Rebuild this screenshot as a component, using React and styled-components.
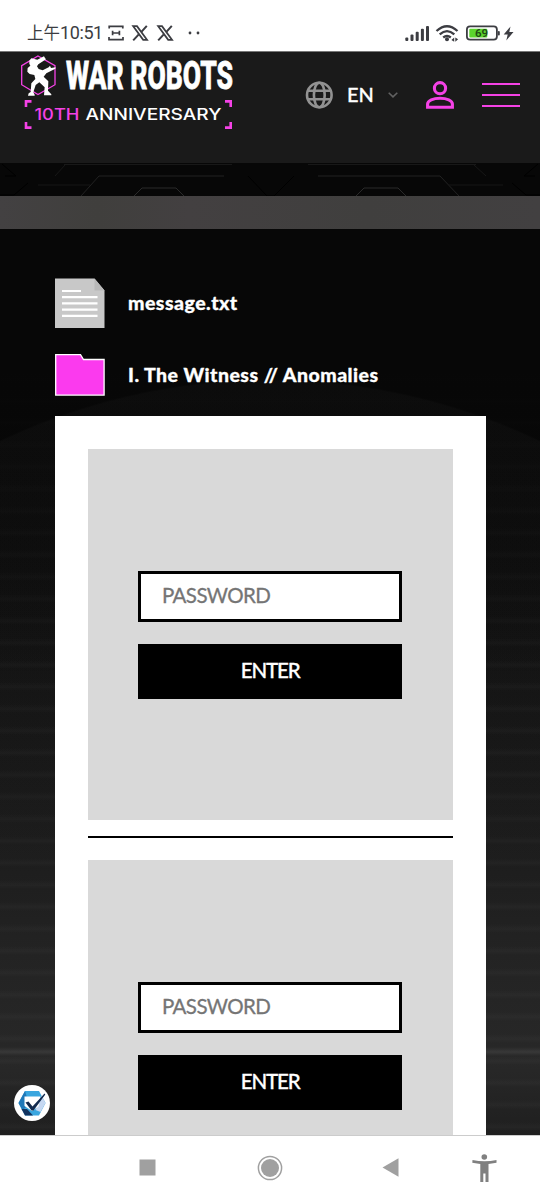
import React, { useState } from 'react';
import styled, { createGlobalStyle } from 'styled-components';

const pink = '#f542e6';

const GlobalStyle = createGlobalStyle`
  body {
    margin: 0;
    background: #fff;
    font-family: Lato, "Noto Sans CJK SC", sans-serif;
  }
  *, *::before, *::after {
    box-sizing: border-box;
  }
  svg {
    display: block;
    flex: none;
    overflow: visible;
  }
`;

const Screen = styled.div`
  width: 540px;
  height: 1200px;
  display: flex;
  flex-direction: column;
  overflow: hidden;
  background: #fff;
`;

const StatusBar = styled.div`
  flex: none;
  height: 52px;
  padding: 15px 26px 0 27px;
  display: flex;
  justify-content: space-between;
  align-items: center;
  border-bottom: 1px solid #777;
`;

const Clock = styled.span`
  width: 81px;
  font: 18px/24px Roboto, "Noto Sans CJK SC", sans-serif;
  letter-spacing: -0.4px;
  white-space: nowrap;
  color: #3c3d42;

  small {
    font-size: 16.5px;
    letter-spacing: 0;
  }
`;

const StatusGroup = styled.div`
  display: flex;
  align-items: center;
`;

const Header = styled.header`
  flex: none;
  height: 111px;
  padding: 0 20px;
  display: flex;
  align-items: flex-start;
  background: #1a1a1a;
`;

const HeaderTools = styled.div`
  height: 86px;
  margin-left: 69px;
  display: flex;
  align-items: center;
`;

const Language = styled.button`
  margin: 0 28px 0 0;
  padding: 0;
  display: flex;
  align-items: center;
  border: 0;
  background: none;
  color: #fff;
  font: 500 20px/24px Lato, sans-serif;
`;

const LanguageName = styled.span`
  width: 27px;
  margin: 0 14px;
  padding-bottom: 2px;
  -webkit-text-stroke: 0.3px #fff;
`;

const MenuButton = styled.button`
  width: 38px;
  height: 24px;
  margin-left: 28px;
  padding: 0;
  display: flex;
  flex-direction: column;
  justify-content: space-between;
  border: 0;
  background: none;

  span {
    width: 38px;
    height: 2.4px;
    background: ${pink};
  }
`;

const MetalBand = styled.div`
  flex: none;
  height: 33px;
  background: linear-gradient(90deg, #434142, #403f3d 18%, #434041 35%, #403f3e 68%, #424041);
`;

const Content = styled.main`
  flex: 1;
  min-height: 0;
  padding: 49px 54.5px 0 55px;
  overflow: hidden;
  color: #fff;
  background:
    linear-gradient(transparent 818px, #383838 823px, transparent 827px),
    radial-gradient(circle 628px at 270px 778px, rgba(255, 255, 255, 0.018) 99.7%, transparent 100%),
    linear-gradient(#070707 15%, transparent 50%),
    repeating-linear-gradient(transparent 0 13px, rgba(255, 255, 255, 0.022) 18px, transparent 22px),
    linear-gradient(#060606, #080808 20%, #0b0b0b 35%, #151515 62%, #1f1f1f 80%, #242424 92%, #1b1b1b);
`;

const FileRow = styled.div`
  height: ${(props) => props.$height}px;
  margin-bottom: ${(props) => props.$gap}px;
  display: flex;
  align-items: center;
`;

const FileName = styled.span`
  margin-left: 23px;
  font-size: 19.5px;
  line-height: 24px;
  font-weight: 900;
  letter-spacing: 0.47px;
  white-space: nowrap;
  -webkit-text-stroke: 0.3px #fff;
`;

const Card = styled.section`
  height: 850px;
  padding: 33px;
  background: #fff;
`;

const LockedEntry = styled.form`
  height: 371px;
  padding: 121.5px 50.5px 0 50.4px;
  display: flex;
  flex-direction: column;
  background: #d9d9d9;
`;

const PasswordInput = styled.input`
  width: 100%;
  height: 51px;
  padding: 0 20.5px 2px;
  border: 3px solid #000;
  border-radius: 0;
  background: #fff;
  font: 20.5px Lato, sans-serif;
  letter-spacing: -0.6px;

  &::placeholder {
    color: #757575;
    -webkit-text-stroke: 0.3px #757575;
  }
`;

const EnterButton = styled.button`
  width: 100%;
  height: 55px;
  margin-top: 22px;
  padding: 0 0 2px;
  border: 0;
  background: #000;
  color: #fff;
  font: 500 20.5px Lato, sans-serif;
  letter-spacing: -1.1px;
  -webkit-text-stroke: 0.3px #fff;
`;

const Divider = styled.hr`
  height: 1.5px;
  margin: 16px 0 22.5px;
  border: 0;
  background: #000;
`;

const ConsentBadge = styled.button`
  position: absolute;
  left: 14px;
  top: 1085px;
  width: 36px;
  height: 36px;
  padding: 0;
  border: 0;
  border-radius: 50%;
  background: #fff;
`;

const NavBar = styled.nav`
  flex: none;
  height: 65px;
  padding: 0 43px 1px 139px;
  display: flex;
  align-items: center;
  border-top: 1px solid #ccc;
  background: #fff;

  svg:nth-child(2) {
    margin: 0 99px 0 101px;
  }

  svg:last-child {
    margin-left: 73px;
  }
`;

const XMark = ({ x }) => (
  <g transform={`translate(${x} 0)`} stroke="#3c3d42" fill="none">
    <path d="M1.2 1.2h3.8l10 13.6h-3.8z" strokeWidth="1.8" />
    <path d="M14.8.8 9.4 6.8M6.8 9.4 1.2 15.4" strokeWidth="2" />
  </g>
);

const NotificationIcons = () => (
  <svg width="92" height="16" viewBox="0 0 92 16">
    <path
      d="M1.2 3.6V1.4h13.6v2.2M4.6 5.8v4.4M11.4 5.8v4.4M4.6 8h6.8M1 12v2.6h14V12"
      fill="none"
      stroke="#3c3d42"
      strokeWidth="1.7"
    />
    <XMark x={24} />
    <XMark x={49} />
    <circle cx="82" cy="8" r="1.4" fill="#3c3d42" />
    <circle cx="90" cy="8" r="1.4" fill="#3c3d42" />
  </svg>
);

const SystemIcons = () => (
  <svg width="109" height="18" viewBox="405 24 109 18">
    <g fill="#3c3d42">
      <rect x="405.3" y="37.5" width="3" height="3.5" rx="1" />
      <rect x="410.5" y="34.5" width="3" height="6.5" rx="1" />
      <rect x="415.7" y="31.8" width="3" height="9.2" rx="1" />
      <rect x="420.9" y="28.8" width="3" height="12.2" rx="1" />
      <rect x="426" y="26" width="3" height="15" rx="1" />
      <circle cx="447" cy="39.3" r="2" />
      <path d="M454.2 37.5v4.2l-2.8-1.6zM455.3 41.8v-4.2l2.8 1.6z" />
      <path d="m510.5 26.5-6.8 8h4l-1.4 6 7.2-8.6h-4.2z" />
      <rect x="497.8" y="31" width="2" height="4.5" rx="1" />
    </g>
    <g fill="none" stroke="#3c3d42" strokeWidth="2.3">
      <path d="M436.5 31q10.5-9.6 21 0M439.7 34.4q7.3-6.6 14.6 0M443.2 37.5q3.8-3 7.6 0" />
    </g>
    <rect x="466.9" y="26.3" width="30" height="13.4" rx="3.2" fill="#fff" stroke="#3c3d42" strokeWidth="1.8" />
    <rect x="469.3" y="28.7" width="18" height="8.7" rx="1" fill="#5bd52d" />
    <text x="475" y="37.2" fontFamily="Roboto, sans-serif" fontSize="11.5" fontWeight="600" fill="#1f4b14">
      69
    </text>
  </svg>
);

const Logo = () => (
  <svg width="216" height="84" viewBox="20 52 216 84">
    <path d="m38 56 17 9.7v19L38 94.5l-16.3-9.8v-19z" fill="none" stroke={pink} strokeWidth="1.3" />
    <path
      transform="scale(.3333)"
      d="m88 182 6-7 12 3 6 1 20-10 3 5 3 4-23 15-4 6 5 8 12 4 18-9 4-5 3 7 14-2-1 4-27 14-8 10 14 14-1 28 10 11v3h-22l2-24-16-15-11 8-7 22 4 7v3h-20l2-7 6-4 2-26 12-13-3-12-14-3-7-7 1-11 8-7-3-6z"
      fill="#fff"
    />
    <text
      x="66"
      y="89.3"
      fontFamily="Roboto, sans-serif"
      fontSize="39.5"
      fontWeight="800"
      fill="#fff"
      stroke="#fff"
      strokeWidth="0.8"
      textLength="167"
      lengthAdjust="spacingAndGlyphs"
    >
      WAR ROBOTS
    </text>
    <g fontFamily="Inter, sans-serif" fontSize="15.5" fontWeight="500">
      <text x="34.5" y="119.8" fill={pink} textLength="45" lengthAdjust="spacingAndGlyphs">
        10TH
      </text>
      <text x="85.5" y="119.8" fill="#fff" textLength="136" lengthAdjust="spacingAndGlyphs">
        ANNIVERSARY
      </text>
    </g>
    <path
      d="M26 107v-5.6h5.5M26 122v5.6h5.5M225 101.4h5.7v5.6M225 127.6h5.7V122"
      fill="none"
      stroke={pink}
      strokeWidth="2.6"
    />
  </svg>
);

const GlobeIcon = () => (
  <svg width="28" height="28" viewBox="0 0 28 28" fill="none" stroke="#929292" strokeWidth="2.6">
    <circle cx="14.3" cy="14" r="12.3" />
    <ellipse cx="14.3" cy="14" rx="5.4" ry="12.3" />
    <path d="M3 9.7h22.6M3 18.3h22.6" />
  </svg>
);

const ChevronIcon = () => (
  <svg width="10" height="8" viewBox="0 0 10 8">
    <path d="m.7 1.7 4.3 4.2 4.3-4.2" fill="none" stroke="#626262" strokeWidth="1.5" />
  </svg>
);

const UserIcon = () => (
  <svg width="28" height="28" viewBox="0 0 28 28" fill="none" stroke={pink} strokeWidth="3.1">
    <circle cx="14" cy="7.2" r="5.6" />
    <path d="M1.6 26.2V23c0-3.4 5.6-5.8 12.4-5.8s12.4 2.400 12.400 5.800v3.200z" />
  </svg>
);

// strip of engraved panel lines below the header
const PanelLines = () => (
  <svg width="540" height="33" viewBox="0 0 540 33">
    <rect width="540" height="33" fill="#070707" />
    <g fill="none" stroke="#222">
      <path d="M64 1.5h168M308 1.5h168" stroke="#181818" />
      <path d="m81 33 18-20h125M318 13h122l19 20" />
      <path d="m134 33 8-8h34l8 8M356 33l8-8h34l8 8" stroke="#2a2a2a" />
      <path d="M38 22h52M449 22h54M65 2 55 13M474 2l12 11" stroke="#171717" />
    </g>
    <path
      d="m248 13 19 20h7l20-20M2 1l14 12H5M538 1l-14 12h11M0 32h14l14-12M540 32h-14l-14-12"
      fill="none"
      stroke="#000"
    />
  </svg>
);

const FileIcon = () => (
  <svg width="50" height="50" viewBox="0 0 50 50">
    <path d="M0 .5h39.5l10 12V50H0z" fill="#c8c8c8" />
    <path d="M39.5.5v12h10z" fill="#b8b8b8" />
    <path d="M7 13h19M7 19.2h35.5M7 25.4h35.5M7 31.6h35.5M7 37.8h35.5" stroke="#fff" strokeWidth="2.2" />
  </svg>
);

const FolderIcon = () => (
  <svg width="50" height="42" viewBox="0 0 50 42">
    <path d="M.7.7h24.8l3 4.8h20.6v35.6H.7z" fill="#fb3aee" stroke="#fff" strokeWidth="1.3" />
  </svg>
);

const ConsentIcon = () => (
  <svg width="36" height="36" viewBox="0 0 36 36">
    <path d="M11 6h14l6.500 12L25 30.500H11L4.500 18z" fill="#3aa6df" />
    <path d="M11 6 4.500 18l4 7.500 4-4V11z" fill="#1f78b8" />
    <path d="m7.500 24 5.500 0 6 6.500h-8z" fill="#12335f" />
    <path d="m27.500 10.500 4 7.500-5 9-5-2z" fill="#c5d8f2" />
    <path d="M10.500 11.500h16l-2 10-6.500 4.500-7.500-5z" fill="#fff" />
    <path d="m11.500 17.500 3-1 4 5L30.500 8.500l.8 1L19.500 25.500h-2z" fill="#132b4f" />
  </svg>
);

const PasswordEntry = () => {
  const [password, setPassword] = useState('');

  return (
    <LockedEntry onSubmit={(event) => event.preventDefault()}>
      <PasswordInput
        type="text"
        placeholder="PASSWORD"
        value={password}
        onChange={(event) => setPassword(event.target.value)}
      />
      <EnterButton type="submit">ENTER</EnterButton>
    </LockedEntry>
  );
};

const App = () => {
  return (
    <Screen>
      <GlobalStyle />
      <StatusBar>
        <StatusGroup>
          <Clock>
            <small>上午</small>10:51
          </Clock>
          <NotificationIcons />
        </StatusGroup>
        <SystemIcons />
      </StatusBar>

      <Header>
        <Logo />
        <HeaderTools>
          <Language>
            <GlobeIcon />
            <LanguageName>EN</LanguageName>
            <ChevronIcon />
          </Language>
          <UserIcon />
          <MenuButton aria-label="Menu">
            <span />
            <span />
            <span />
          </MenuButton>
        </HeaderTools>
      </Header>

      <PanelLines />
      <MetalBand />

      <Content>
        <FileRow $height={50} $gap={26}>
          <FileIcon />
          <FileName>message.txt</FileName>
        </FileRow>
        <FileRow $height={42} $gap={20}>
          <FolderIcon />
          <FileName>I. The Witness // Anomalies</FileName>
        </FileRow>
        <Card>
          <PasswordEntry />
          <Divider />
          <PasswordEntry />
        </Card>
      </Content>

      <ConsentBadge aria-label="Cookie settings">
        <ConsentIcon />
      </ConsentBadge>

      <NavBar>
        <svg width="17" height="17" viewBox="0 0 17 17">
          <rect x=".5" y=".5" width="16" height="16" fill="#a0a0a0" />
        </svg>
        <svg width="26" height="26" viewBox="0 0 26 26">
          <circle cx="13" cy="13" r="11.6" fill="none" stroke="#a0a0a0" strokeWidth="1.5" />
          <circle cx="13" cy="13" r="9" fill="#a0a0a0" />
        </svg>
        <svg width="17" height="19" viewBox="0 0 17 19">
          <path d="M.5 9.5 16.5.3v18.4z" fill="#a0a0a0" />
        </svg>
        <svg width="25" height="28" viewBox="0 0 25 28" fill="#808080">
          <circle cx="12.3" cy="3" r="2.8" />
          <path d="M.5 6q12 2.5 24 0v2.7l-8 1.2V28h-3v-8.5h-2.2V28h-3V9.9l-8-1.2z" />
        </svg>
      </NavBar>
    </Screen>
  );
};

export default App;
